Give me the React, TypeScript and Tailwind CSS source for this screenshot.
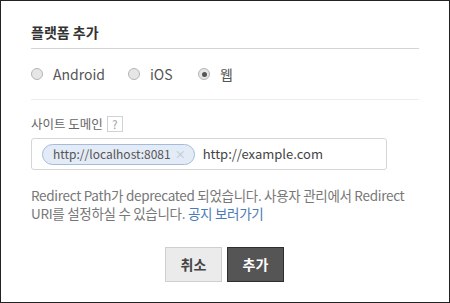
import React from 'react';

const font = { fontFamily: '"Noto Sans CJK KR", "Noto Sans", sans-serif' };

const Radio: React.FC<{ label: string; checked?: boolean }> = ({ label, checked }) => (
    <label className="flex items-center">
        <span className="w-[12px] h-[12px] rounded-full border border-[#b5b5b5] bg-[#e6e6e6] flex items-center justify-center">
            {checked && <span className="w-[5px] h-[5px] rounded-full bg-[#555]" />}
        </span>
        <span className="ml-[10px] text-[14px] text-[#555]">{label}</span>
    </label>
);

export default function App() {
    return (
        <div className="w-[450px] h-[303px] bg-white border border-[#222] text-[#333]" style={font}>
            <div className="px-[30px] pt-[14px]">
                <h2 className="text-[14px] font-bold text-[#333] h-[34px] leading-[34px] border-b border-[#d4d4d4]">
                    플랫폼 추가
                </h2>

                <div className="flex items-center h-[51px] border-b border-[#ececec]">
                    <div className="w-[97px]"><Radio label="Android" /></div>
                    <div className="w-[70px]"><Radio label="iOS" /></div>
                    <Radio label="웹" checked />
                </div>

                <div className="flex items-center mt-[14px] h-[20px]">
                    <span className="text-[12.5px] text-[#666]">사이트 도메인</span>
                    <span className="ml-[4px] w-[16px] h-[16px] border border-[#d2d2d2] text-[11px] leading-[14px] text-center text-[#999]">?</span>
                </div>

                <div className="mt-[4px] w-[356px] h-[32px] border border-[#d6d6d6] rounded-[3px] flex items-center px-[10px]">
                    <span className="flex items-center h-[21px] pl-[10px] pr-[8px] rounded-full bg-[#e3ebf6] border border-[#a5bbdb] text-[12px] text-[#555]">
                        http://localhost:8081
                        <span className="ml-[4px] text-[11px] text-[#b5c2d4]">×</span>
                    </span>
                    <span className="ml-[8px] text-[13px] text-[#444]">http://example.com</span>
                </div>

                {/* deprecation notice */}
                <div className="mt-[16px] text-[13.5px] leading-[18px] text-[#777] tracking-[-0.3px] whitespace-nowrap">
                    <p>Redirect Path가 deprecated 되었습니다. 사용자 관리에서 Redirect</p>
                    <p>
                        URI를 설정하실 수 있습니다. <span className="text-[#4a7cb8]">공지 보러가기</span>
                    </p>
                </div>

                <div className="flex justify-center gap-[5px] mt-[25px] ml-[-1px]">
                    <button className="w-[57px] h-[35px] bg-[#ebebeb] border border-[#cfcfcf] text-[14px] font-bold text-[#444]">
                        취소
                    </button>
                    <button className="w-[57px] h-[35px] bg-[#555] border border-[#2e2e2e] text-[14px] font-bold text-white">
                        추가
                    </button>
                </div>
            </div>
        </div>
    );
}
